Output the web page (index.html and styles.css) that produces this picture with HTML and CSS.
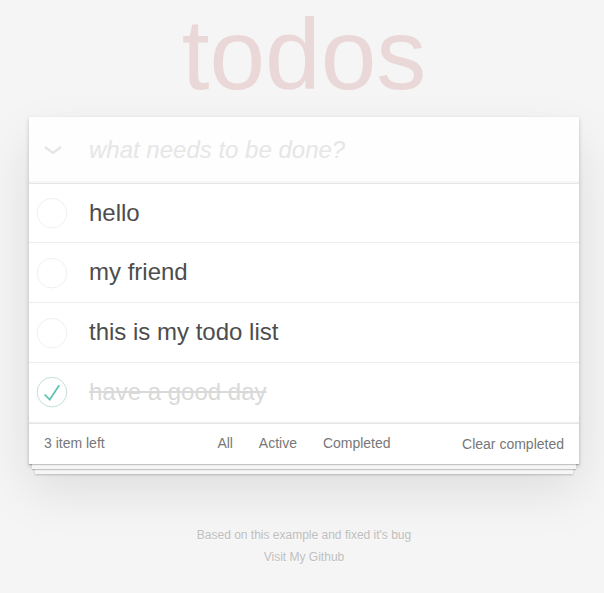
FILE: index.html
```html
<!DOCTYPE html>
<html lang="en">
<head>
<meta charset="utf-8">
<title>todos</title>
<link rel="stylesheet" href="styles.css">
</head>
<body>
<div class="page">
  <h1 class="title">todos</h1>
  <section class="todoapp">
    <header class="header">
      <span class="toggle-all" aria-label="Mark all as complete">
        <svg width="18" height="8" viewBox="0 0 18 8"><polyline points="1,1 9,7 17,1" fill="none" stroke="#e6e6e6" stroke-width="2.4"/></svg>
      </span>
      <input class="new-todo" placeholder="what needs to be done?">
    </header>
    <ul class="todo-list">
      <li class="todo">
        <span class="check"><svg width="40" height="40" viewBox="-10 -18 100 135"><circle cx="50" cy="50" r="50" fill="none" stroke="#ededed" stroke-width="3"/></svg></span>
        <label class="todo-label">hello</label>
      </li>
      <li class="todo">
        <span class="check"><svg width="40" height="40" viewBox="-10 -18 100 135"><circle cx="50" cy="50" r="50" fill="none" stroke="#ededed" stroke-width="3"/></svg></span>
        <label class="todo-label">my friend</label>
      </li>
      <li class="todo">
        <span class="check"><svg width="40" height="40" viewBox="-10 -18 100 135"><circle cx="50" cy="50" r="50" fill="none" stroke="#ededed" stroke-width="3"/></svg></span>
        <label class="todo-label">this is my todo list</label>
      </li>
      <li class="todo completed">
        <span class="check"><svg width="40" height="40" viewBox="-10 -18 100 135"><circle cx="50" cy="50" r="50" fill="none" stroke="#bddad5" stroke-width="3"/><path fill="#5dc2af" d="M72 25L42 71 27 56l-4 4 20 20 34-52z"/></svg></span>
        <label class="todo-label">have a good day</label>
      </li>
    </ul>
    <footer class="footer">
      <span class="todo-count">3 item left</span>
      <ul class="filters">
        <li><a class="filter">All</a></li>
        <li><a class="filter">Active</a></li>
        <li><a class="filter">Completed</a></li>
      </ul>
      <button class="clear-completed">Clear completed</button>
    </footer>
  </section>
  <footer class="info">
    <p class="info-line">Based on this example and fixed it's bug</p>
    <p class="info-line">Visit My Github</p>
  </footer>
</div>
</body>
</html>
```
FILE: styles.css
```css
html, body {
  margin: 0;
  padding: 0;
}

body {
  padding-left: 4px;
  background: #f5f5f5;
  color: #4d4d4d;
  font: 14px "Liberation Sans", Helvetica, Arial, sans-serif;
  line-height: 1.4em;
  -webkit-font-smoothing: antialiased;
}

.page {
  max-width: 550px;
  margin: 0 auto;
}

.title {
  margin: 0 0 9px;
  height: 108px;
  font-size: 100px;
  line-height: 108px;
  font-weight: 100;
  text-align: center;
  color: rgba(175, 47, 47, 0.15);
}

.todoapp {
  position: relative;
  background: #fff;
  box-shadow: 0 2px 4px 0 rgba(0, 0, 0, 0.2), 0 25px 50px 0 rgba(0, 0, 0, 0.1);
}

.header {
  display: flex;
  align-items: center;
  height: 65.6px;
  box-shadow: inset 0 -2px 1px rgba(0, 0, 0, 0.03);
  background: rgba(0, 0, 0, 0.003);
}

.toggle-all {
  flex: none;
  width: 60px;
  box-sizing: border-box;
  padding-left: 15px;
  display: flex;
  align-items: center;
}

.toggle-all svg {
  display: block;
}

.new-todo {
  flex: 1;
  min-width: 0;
  height: 65.6px;
  box-sizing: border-box;
  padding: 16px 16px 16px 0;
  border: none;
  outline: none;
  background: transparent;
  font: inherit;
  font-size: 24px;
  line-height: 1.4em;
  color: inherit;
}

.new-todo::placeholder {
  font-style: italic;
  font-weight: 300;
  color: #e6e6e6;
}

.todo-list {
  margin: 0;
  padding: 0;
  list-style: none;
  border-top: 1px solid #e6e6e6;
}

.todo {
  display: flex;
  align-items: center;
  border-bottom: 1px solid #ededed;
  font-size: 24px;
}

.check {
  flex: none;
  width: 40px;
  height: 40px;
}

.check svg {
  display: block;
}

.todo-label {
  flex: 1;
  padding: 15px 60px 15px 20px;
  line-height: 1.2;
  word-break: break-all;
  color: #4d4d4d;
}

.completed .todo-label {
  color: #d9d9d9;
  text-decoration: line-through;
}

.footer {
  position: relative;
  display: grid;
  grid-template-columns: 1fr auto 1fr;
  grid-template-rows: 20px;
  align-items: center;
  height: 20px;
  padding: 10px 15px;
  border-top: 1px solid #e6e6e6;
  color: #777;
}

.footer::before {
  content: "";
  position: absolute;
  right: 0;
  bottom: 0;
  left: 0;
  height: 50px;
  overflow: hidden;
  pointer-events: none;
  box-shadow: 0 1px 1px rgba(0, 0, 0, 0.2),
    0 8px 0 -3px #f6f6f6,
    0 9px 1px -3px rgba(0, 0, 0, 0.2),
    0 16px 0 -6px #f6f6f6,
    0 17px 2px -6px rgba(0, 0, 0, 0.2);
}

.todo-count {
  text-align: left;
}

.filters {
  display: flex;
  gap: 3.9px;
  margin: 0;
  padding: 0;
  list-style: none;
}

.filter {
  display: block;
  margin: 3px;
  padding: 3px 7px;
  border: 1px solid transparent;
  border-radius: 3px;
  color: inherit;
  line-height: 1.4em;
}

.clear-completed {
  justify-self: end;
  margin: 0;
  padding: 0;
  border: 0;
  background: none;
  font: inherit;
  line-height: 20px;
  color: inherit;
}

.info {
  margin: 65px auto 0;
  color: #bfbfbf;
  font-size: 12px;
  text-align: center;
  text-shadow: 0 1px 0 rgba(255, 255, 255, 0.5);
}

.info-line {
  margin: 0 0 10px;
  line-height: 12px;
}
```
